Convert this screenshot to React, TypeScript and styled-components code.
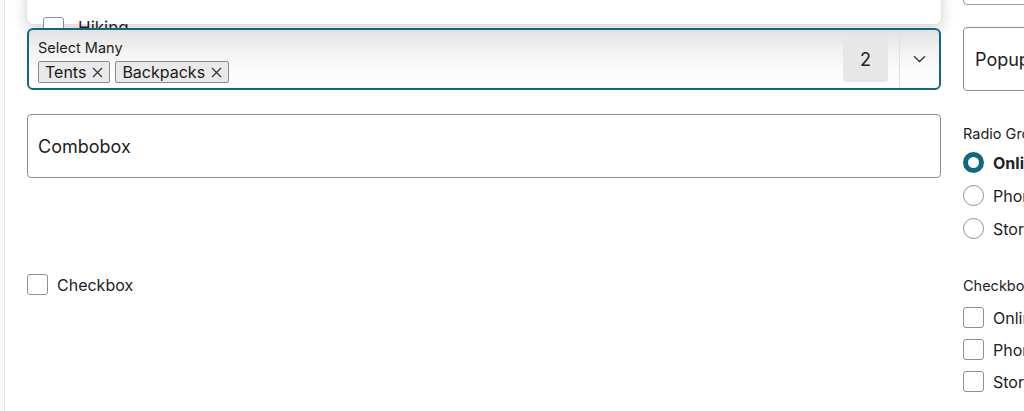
import React from "react";
import styled, { createGlobalStyle } from "styled-components";

const Global = createGlobalStyle`
  html, body { margin: 0; padding: 0; background: #fff; }
  body { font-family: Inter, "Liberation Sans", sans-serif; color: #222; }
  * { box-sizing: border-box; }
`;

const teal = "#106880";

const Page = styled.div`
  width: 1024px;
  height: 411px;
  overflow: hidden;
  display: flex;
  background: #fff;
`;

const EdgeStrip = styled.div`
  width: 5px;
  flex: none;
  background: #f8f8f8;
  border-right: 1px solid #e6e6e6;
`;

const Main = styled.div`
  position: relative;
  width: 936px;
  flex: none;
  padding: 28px 0 0 22px;
  display: flex;
  flex-direction: column;
`;

const Popover = styled.div`
  position: absolute;
  left: 21px;
  top: -60px;
  width: 916px;
  height: 85px;
  background: #fff;
  border: 1px solid #e2e2e2;
  border-radius: 7px;
  box-shadow: 0 4px 14px rgba(0, 0, 0, 0.18);
  z-index: 1;
  display: flex;
  align-items: flex-end;
  padding: 0 0 0 16px;
`;

const PopRow = styled.div`
  display: flex;
  align-items: center;
  gap: 14px;
  margin-bottom: -14px;
  font-size: 17px;
`;

const Box = styled.span<{ $size?: number }>`
  width: ${(p) => p.$size ?? 21}px;
  height: ${(p) => p.$size ?? 21}px;
  flex: none;
  border: 1px solid #8e8e8e;
  border-radius: 3px;
  background: #fff;
`;

const Select = styled.div`
  position: relative;
  z-index: 2;
  width: 914px;
  height: 62px;
  border: 2px solid ${teal};
  border-radius: 6px;
  background: linear-gradient(to bottom, #e2e2e2 0%, #f2f2f2 35%, #fcfcfc 70%, #fff 100%);
  display: flex;
  align-items: stretch;
`;

const SelectBody = styled.div`
  flex: 1;
  display: flex;
  flex-direction: column;
  padding: 9px 0 0 9px;
`;

const SmallLabel = styled.div`
  font-size: 14.5px;
  line-height: 18px;
  color: #222;
`;

const Tags = styled.div`
  display: flex;
  gap: 5px;
  margin-top: 4px;
`;

const Tag = styled.span`
  display: inline-flex;
  align-items: center;
  gap: 6px;
  height: 22px;
  padding: 0 6px 0 6px;
  background: #e9e9e9;
  border: 1px solid #8a8a8a;
  border-radius: 2px;
  font-size: 16px;
  color: #1a1a1a;
`;

const Count = styled.div`
  align-self: center;
  width: 45px;
  height: 45px;
  margin-right: 11px;
  background: #e7e7e7;
  border-radius: 3px;
  display: flex;
  align-items: center;
  justify-content: center;
  font-size: 18px;
  color: #222;
`;

const ChevronCell = styled.div`
  width: 40px;
  border-left: 1px solid #e0e0e0;
  display: flex;
  align-items: center;
  justify-content: center;
`;

const Combobox = styled.div`
  margin-top: 24px;
  width: 914px;
  height: 64px;
  border: 1px solid #8c8c8c;
  border-radius: 4px;
  display: flex;
  align-items: center;
  padding-left: 10px;
  font-size: 18px;
  color: #222;
`;

const CheckRow = styled.div<{ $top?: number }>`
  display: flex;
  align-items: center;
  gap: 9px;
  margin-top: ${(p) => p.$top ?? 0}px;
  height: 21px;
  font-size: 16px;
  color: #222;
`;

const Side = styled.div`
  margin-left: 22px;
  width: 200px;
  flex: none;
  display: flex;
  flex-direction: column;
`;

const TopBox = styled.div`
  margin-top: -26px;
  height: 31px;
  width: 160px;
  border: 1px solid #9a9a9a;
  border-radius: 4px;
`;

const Popup = styled.div`
  margin-top: 22px;
  height: 64px;
  width: 160px;
  border: 1px solid #8c8c8c;
  border-radius: 4px;
  display: flex;
  align-items: center;
  padding-left: 11px;
  font-size: 18px;
`;

const GroupLabel = styled.div<{ $top: number }>`
  margin-top: ${(p) => p.$top}px;
  font-size: 14.5px;
  line-height: 17px;
  white-space: nowrap;
`;

const Item = styled.div<{ $top: number; $bold?: boolean }>`
  display: flex;
  align-items: center;
  gap: 9px;
  height: 21px;
  margin-top: ${(p) => p.$top}px;
  font-size: 16px;
  font-weight: ${(p) => (p.$bold ? 700 : 400)};
  white-space: nowrap;
`;

const Radio = styled.span<{ $on?: boolean }>`
  width: 21px;
  height: 21px;
  flex: none;
  border-radius: 50%;
  background: #fff;
  border: ${(p) => (p.$on ? `5.5px solid ${teal}` : "1px solid #8e8e8e")};
`;

const X = () => (
  <svg width="11" height="11" viewBox="0 0 11 11" fill="none" stroke="#333" strokeWidth="1.2">
    <path d="M1 1L10 10M10 1L1 10" />
  </svg>
);

export default function App() {
  return (
    <Page>
      <Global />
      <EdgeStrip />
      <Main>
        <Popover>
          <PopRow>
            <Box />
            <span>Hiking</span>
          </PopRow>
        </Popover>
        <Select>
          <SelectBody>
            <SmallLabel>Select Many</SmallLabel>
            <Tags>
              <Tag>
                Tents <X />
              </Tag>
              <Tag>
                Backpacks <X />
              </Tag>
            </Tags>
          </SelectBody>
          <Count>2</Count>
          <ChevronCell>
            <svg width="13" height="8" viewBox="0 0 13 8" fill="none" stroke="#333" strokeWidth="1.3">
              <path d="M1 1.2L6.5 6.5L12 1.2" />
            </svg>
          </ChevronCell>
        </Select>
        <Combobox>Combobox</Combobox>
        <CheckRow $top={96}>
          <Box />
          <span>Checkbox</span>
        </CheckRow>
      </Main>
      <Side>
        <TopBox />
        <Popup>Popup</Popup>
        <GroupLabel $top={34}>Radio Group</GroupLabel>
        <Item $top={10} $bold>
          <Radio $on />
          Online
        </Item>
        <Item $top={12}>
          <Radio />
          Phone
        </Item>
        <Item $top={12}>
          <Radio />
          Store
        </Item>
        <GroupLabel $top={38}>Checkbox Group</GroupLabel>
        <Item $top={13}>
          <Box />
          Online
        </Item>
        <Item $top={11}>
          <Box />
          Phone
        </Item>
        <Item $top={11}>
          <Box />
          Store
        </Item>
      </Side>
    </Page>
  );
}
